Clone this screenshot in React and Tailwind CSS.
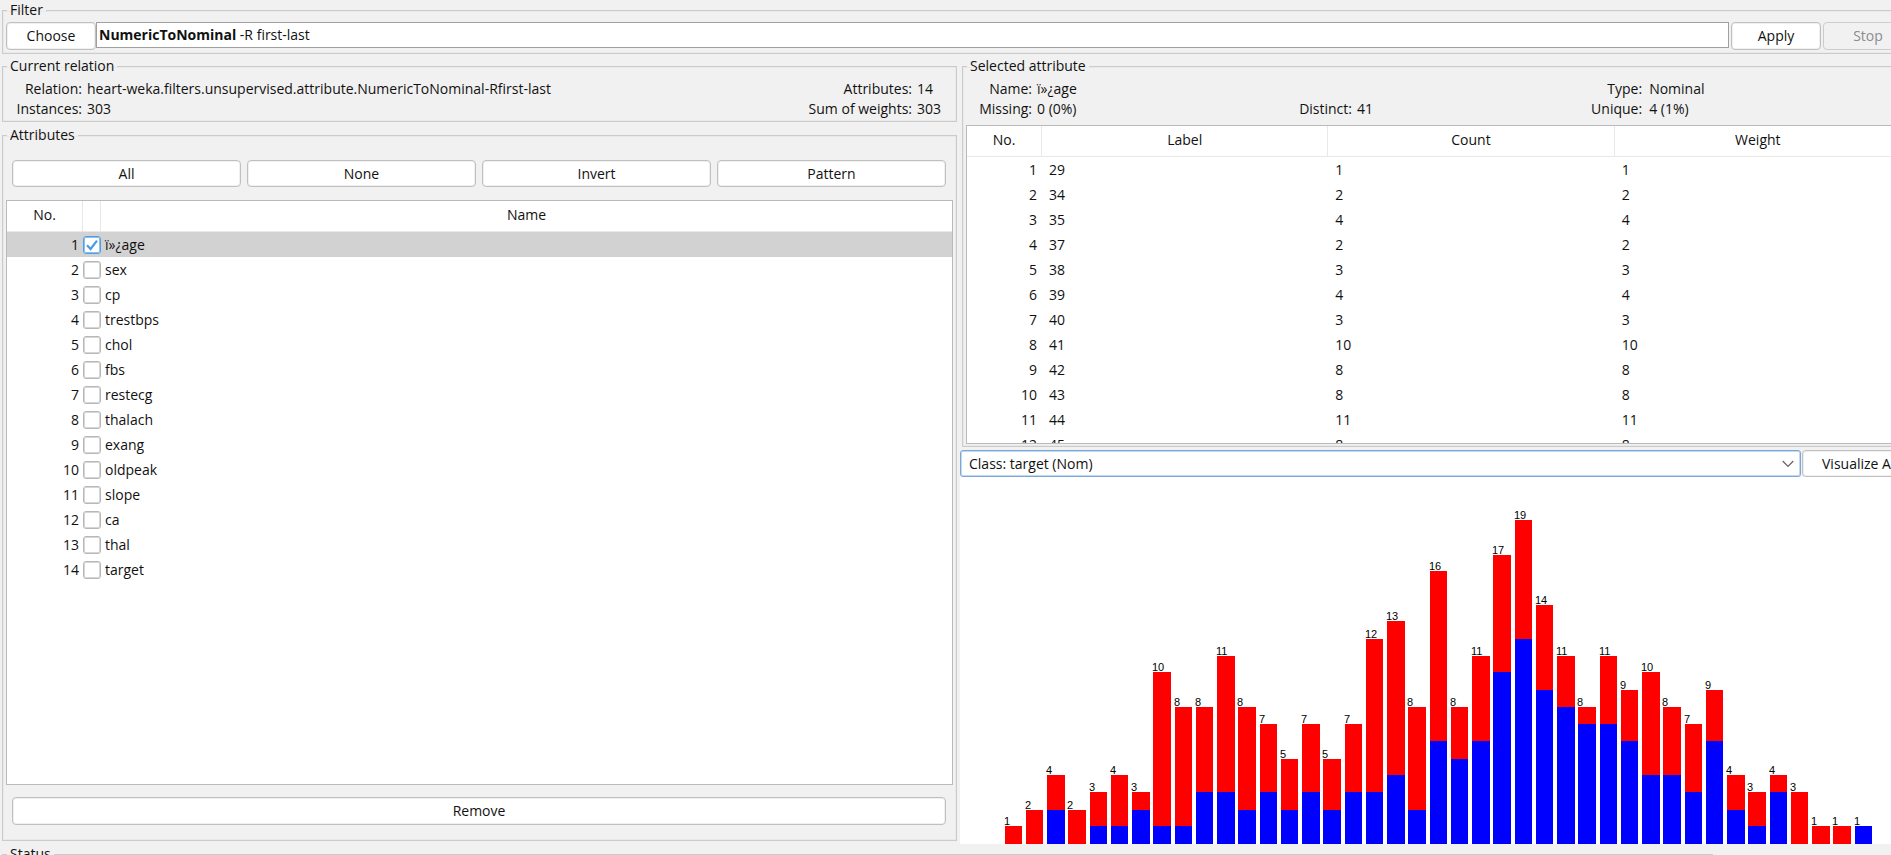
import React, { useState } from 'react';

const ATTRIBUTES = ['ï»¿age', 'sex', 'cp', 'trestbps', 'chol', 'fbs', 'restecg', 'thalach', 'exang', 'oldpeak', 'slope', 'ca', 'thal', 'target'];

const LABELS = [
  [29, 1], [34, 2], [35, 4], [37, 2], [38, 3], [39, 4], [40, 3], [41, 10], [42, 8], [43, 8], [44, 11], [45, 8],
];

// [total count, count of the blue class] for every distinct value
const BARS = [
  [1, 0], [2, 0], [4, 2], [2, 0], [3, 1], [4, 1], [3, 2], [10, 1], [8, 1], [8, 3], [11, 3], [8, 2], [7, 3], [5, 2],
  [7, 3], [5, 2], [7, 3], [12, 3], [13, 4], [8, 2], [16, 6], [8, 5], [11, 6], [17, 10], [19, 12], [14, 9], [11, 8],
  [8, 7], [11, 7], [9, 6], [10, 4], [8, 4], [7, 3], [9, 6], [4, 2], [3, 1], [4, 3], [3, 0], [1, 0], [1, 0], [1, 1],
];

// Bar height in pixels, indexed by count
const HEIGHTS = [0, 18, 34, 52, 69, 85, 103, 120, 137, 154, 172, 188, 205, 223, 239, 256, 273, 289, 307, 324];

const BUTTON = 'rounded-[4px] border border-[#c0c0c0] bg-white text-center leading-5 shadow-[inset_0_0_0_1px_#f0f0f0]';
const HEAD = 'h-[31px] border-b border-[#e8e8e8] p-0 pb-[2px] text-center leading-5 font-normal';

function Group({ title, className, children }) {
  return (
    <fieldset className={`min-w-0 border border-[#cbcbcb] shadow-[inset_0_0_0_1px_#e9e9e9] ${className}`}>
      <legend className="ml-1 h-5 px-[3px] leading-5">{title}</legend>
      {children}
    </fieldset>
  );
}

function FilterBar() {
  return (
    <Group title="Filter" className="mx-[2px] pt-[2px] pb-[3px]">
      <div className="flex items-start pr-1 pl-[3px]">
        <button className={`${BUTTON} h-7 w-[90px]`}>Choose</button>
        <button className="mr-[2px] h-[26px] flex-1 border border-[#a0a0a0] bg-white px-[2px] text-left leading-5" aria-label="Filter options">
          <b className="font-bold">NumericToNominal</b> -R first-last
        </button>
        <button className={`${BUTTON} mr-[2px] h-7 w-[90px]`}>Apply</button>
        <button disabled className="h-7 w-[90px] rounded-[4px] border border-[#cdcdcd] text-center leading-5 text-[#8c8c8c]">Stop</button>
      </div>
    </Group>
  );
}

function Relation() {
  return (
    <Group title="Current relation" className="pt-[3px] pb-[2px]">
      <dl className="grid grid-cols-[79px_1fr_auto_39px] gap-x-[5px] leading-5">
        <dt className="text-right">Relation:</dt>
        <dd>heart-weka.filters.unsupervised.attribute.NumericToNominal-Rfirst-last</dd>
        <dt className="text-right">Attributes:</dt>
        <dd>14</dd>
        <dt className="text-right">Instances:</dt>
        <dd>303</dd>
        <dt className="text-right">Sum of weights:</dt>
        <dd>303</dd>
      </dl>
    </Group>
  );
}

function Attributes() {
  const [picked, setPicked] = useState([0]);
  const toggle = (i) => setPicked((p) => (p.includes(i) ? p.filter((v) => v !== i) : [...p, i]));
  return (
    <Group title="Attributes" className="mt-[3px] flex flex-1 flex-col pb-[15px]">
      <div className="flex gap-[6px] pt-[15px] pr-[10px] pl-[9px]">
        <button className={`${BUTTON} h-[27px] flex-1`}>All</button>
        <button className={`${BUTTON} h-[27px] flex-1`}>None</button>
        <button className={`${BUTTON} h-[27px] flex-1`}>Invert</button>
        <button className={`${BUTTON} h-[27px] flex-1`}>Pattern</button>
      </div>
      <div className="mx-[3px] mt-[13px] min-h-0 flex-1 overflow-hidden border border-[#bababa] bg-white">
        <table className="w-full table-fixed border-separate border-spacing-0">
          <colgroup>
            <col className="w-[76px]" />
            <col className="w-[18px]" />
            <col />
          </colgroup>
          <thead>
            <tr>
              <th className={`${HEAD} border-r`}>No.</th>
              <th className={`${HEAD} border-r`} aria-label="Selected" />
              <th className={HEAD}>Name</th>
            </tr>
          </thead>
          <tbody>
            {ATTRIBUTES.map((name, i) => (
              <tr key={name} className={i === 0 ? 'bg-[#d2d2d2]' : 'bg-white'}>
                <td className="h-[25px] p-0 pr-1 text-right leading-5">{i + 1}</td>
                <td className="p-0">
                  <span className="grid size-[18px]">
                    <input
                      id={`attr-${i}`}
                      type="checkbox"
                      checked={picked.includes(i)}
                      onChange={() => toggle(i)}
                      className="col-start-1 row-start-1 size-[18px] appearance-none rounded-[3px] border border-[#b8b8b8] bg-white shadow-[inset_0_0_0_1px_#d6d6d6] checked:border-[#4f9ee3] checked:shadow-[inset_0_0_0_1px_#8dc0ef]"
                    />
                    {picked.includes(i) && (
                      <svg viewBox="0 0 18 18" className="pointer-events-none col-start-1 row-start-1 size-[18px]" aria-hidden="true">
                        <path d="M4 9.2 L7.6 13 L14 4.6" fill="none" stroke="#4a9be6" strokeWidth="2.2" />
                      </svg>
                    )}
                  </span>
                </td>
                <td className="p-0 pl-1 leading-5"><label htmlFor={`attr-${i}`}>{name}</label></td>
              </tr>
            ))}
          </tbody>
        </table>
      </div>
      <button className={`${BUTTON} mt-3 mr-[10px] ml-[9px] h-7`}>Remove</button>
    </Group>
  );
}

function SelectedAttribute() {
  return (
    <Group title="Selected attribute" className="mx-[2px] pt-[3px] pb-[2px]">
      <div className="grid grid-cols-[32fr_31fr_33fr] px-[3px] leading-5">
        <dl className="grid grid-cols-[66px_1fr] gap-x-[5px]">
          <dt className="text-right">Name:</dt>
          <dd>ï»¿age</dd>
          <dt className="text-right">Missing:</dt>
          <dd>0 (0%)</dd>
        </dl>
        <dl className="grid grid-cols-[70px_1fr] items-end gap-x-[5px]">
          <dt className="text-right">Distinct:</dt>
          <dd>41</dd>
        </dl>
        <dl className="grid grid-cols-[54px_1fr] gap-x-[7px]">
          <dt className="text-right">Type:</dt>
          <dd>Nominal</dd>
          <dt className="text-right">Unique:</dt>
          <dd>4 (1%)</dd>
        </dl>
      </div>
      <div className="mx-[3px] mt-[6px] h-[319px] overflow-hidden border border-[#bababa] bg-white pr-3">
        <table className="w-full table-fixed border-separate border-spacing-0">
          <colgroup>
            <col className="w-[75px]" />
            <col />
            <col />
            <col />
          </colgroup>
          <thead>
            <tr>
              <th className={`${HEAD} border-r`}>No.</th>
              <th className={`${HEAD} border-r`}>Label</th>
              <th className={`${HEAD} border-r`}>Count</th>
              <th className={HEAD}>Weight</th>
            </tr>
          </thead>
          <tbody>
            {LABELS.map(([label, count], i) => (
              <tr key={label}>
                <td className="h-[25px] p-0 pr-[5px] text-right leading-5">{i + 1}</td>
                <td className="p-0 pl-[7px] leading-5">{label}</td>
                <td className="p-0 pl-[7px] leading-5">{count}</td>
                <td className="p-0 pl-[7px] leading-5">{count}</td>
              </tr>
            ))}
          </tbody>
        </table>
      </div>
    </Group>
  );
}

function ClassPicker() {
  return (
    <div className="mt-[3px] flex gap-px pr-[2px]">
      <div className="grid flex-1 items-center">
        <select
          aria-label="Class attribute"
          className="col-start-1 row-start-1 h-[27px] w-full appearance-none rounded-[3px] border border-[#7ba7d7] bg-white px-2 leading-5 shadow-[inset_0_0_0_1px_#c3d9ef]"
        >
          <option>Class: target (Nom)</option>
        </select>
        <svg viewBox="0 0 12 8" className="pointer-events-none col-start-1 row-start-1 mr-[7px] h-2 w-3 justify-self-end" aria-hidden="true">
          <path d="M0.7 1 L6 6.4 L11.3 1" fill="none" stroke="#666" strokeWidth="1.3" />
        </svg>
      </div>
      <button className={`${BUTTON} h-[27px] w-[116px]`}>Visualize All</button>
    </div>
  );
}

function Histogram() {
  const base = 344;
  return (
    <div className="flex min-h-0 flex-1 items-end overflow-hidden bg-white">
      <svg className="h-[344px] w-full shrink-0" role="img" aria-label="Class distribution per value" shapeRendering="crispEdges">
        {BARS.map(([total, blue], i) => {
          const x = Math.floor(45 + 21.25 * i);
          const w = Math.floor(62.5 + 21.25 * i) - x;
          const top = base - HEIGHTS[total];
          return (
            <g key={i}>
              <rect x={x} y={top} width={w} height={HEIGHTS[total]} fill="#ff0000" />
              <rect x={x} y={base - HEIGHTS[blue]} width={w} height={HEIGHTS[blue]} fill="#0000ff" />
              <text x={x - 1} y={top - 1} className="fill-black font-['Liberation_Sans',Arial,sans-serif] text-[11px]">{total}</text>
            </g>
          );
        })}
      </svg>
    </div>
  );
}

export default function App() {
  return (
    <div className="h-screen overflow-hidden bg-[#f1f1f1] font-['Open_Sans','Noto_Sans',sans-serif] text-[14px] text-[#111]">
      <div className="flex h-[calc(100%+49px)] w-[calc(100%+29px)] flex-col">
        <FilterBar />
        <main className="grid min-h-0 flex-1 grid-cols-2 pt-[2px]">
          <section className="flex min-h-0 flex-col pr-[3px] pb-[3px] pl-[2px]">
            <Relation />
            <Attributes />
          </section>
          <section className="flex min-h-0 min-w-0 flex-col">
            <SelectedAttribute />
            <ClassPicker />
            <Histogram />
          </section>
        </main>
        <Group title="Status" className="mr-[207px] ml-[2px] h-[60px] shrink-0">
          <output className="block px-2 leading-5">OK</output>
        </Group>
      </div>
    </div>
  );
}
